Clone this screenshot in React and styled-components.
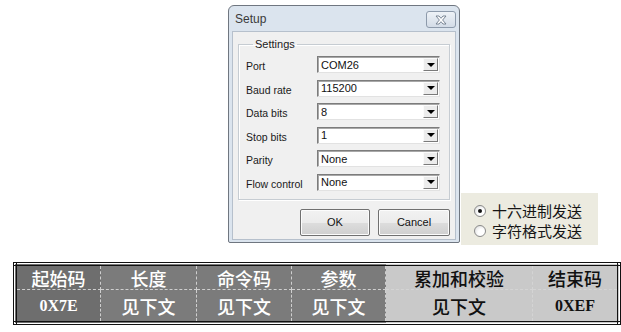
import React from 'react'
import styled, {createGlobalStyle} from 'styled-components'

const Global = createGlobalStyle`
  body{
    margin: 0;
    background: #fff;
  }
`;

const Page = styled.div`
  width: 621px;
  height: 332px;
  overflow: hidden;
`;

const Top = styled.div`
  display: flex;
  align-items: flex-start;
  padding: 5px 0 0 228px;
  gap: 1px;
`;

// --- setup dialog ---
const Dialog = styled.div`
  width: 232px;
  height: 238px;
  box-sizing: border-box;
  border: 1px solid #6f7680;
  border-radius: 6px 6px 2px 2px;
  background: #dbe4ee;
  padding: 0 3px 2px 3px;
  display: flex;
  flex-direction: column;
  font-family: "Liberation Sans", Arial, sans-serif;
`;

const TitleBar = styled.div`
  height: 25px;
  display: flex;
  align-items: center;
  justify-content: space-between;
  padding: 0 0 0 3px;
`;

const Title = styled.span`
  font-size: 12px;
  color: #3a3a3a;
`;

const CloseBtn = styled.div`
  width: 30px;
  height: 17px;
  box-sizing: border-box;
  border: 1px solid #8d9aab;
  border-radius: 3px;
  background: linear-gradient(#eef2f7, #d3dce7);
  display: flex;
  align-items: center;
  justify-content: center;
  margin-top: 2px;
`;

const Client = styled.div`
  flex: 1;
  background: #f0f0f0;
  border: 1px solid #b6c0cc;
  padding: 6px 5px 0 5px;
  display: flex;
  flex-direction: column;
`;

const Group = styled.fieldset`
  margin: 0;
  padding: 5px 9px 8px 7px;
  border: 1px solid #c6ccd2;
  box-shadow: inset 1px 1px #fff, 1px 1px #fff;
  display: flex;
  flex-direction: column;
  gap: 6.5px;
`;

const Legend = styled.legend`
  font-size: 11px;
  line-height: 13px;
  color: #222;
  padding: 0 2px;
  margin-left: 7px;
`;

const Row = styled.div`
  display: flex;
  align-items: center;
  height: 17px;
`;

const Label = styled.span`
  width: 71px;
  font-size: 10.5px;
  color: #1a1a1a;
  padding-top: 3px;
`;

const Combo = styled.div`
  width: 123px;
  height: 17px;
  box-sizing: border-box;
  border: 1px solid;
  border-color: #7c7c7c #e2e2e2 #e2e2e2 #7c7c7c;
  box-shadow: inset 1px 1px #a8a8a8;
  background: #fff;
  display: flex;
  align-items: center;
  justify-content: space-between;
  padding: 1px 1px 1px 3px;
  font-size: 11px;
  color: #111;
`;

const Arrow = styled.div`
  width: 15px;
  height: 13px;
  box-sizing: border-box;
  border: 1px solid;
  border-color: #fbfbfb #7a7a7a #7a7a7a #fbfbfb;
  background: #ececec;
  display: flex;
  align-items: center;
  justify-content: center;
  &::after{
    content: "";
    border-left: 4px solid transparent;
    border-right: 4px solid transparent;
    border-top: 4px solid #000;
  }
`;

const ButtonRow = styled.div`
  display: flex;
  justify-content: flex-end;
  gap: 8px;
  margin-top: 9px;
`;

const Btn = styled.div`
  width: ${p => p.w}px;
  height: 27px;
  box-sizing: border-box;
  border: 1px solid #707070;
  border-radius: 2px;
  background: linear-gradient(#f2f2f2 0%, #ebebeb 50%, #dddddd 51%, #cfcfcf 100%);
  box-shadow: inset 0 0 0 1px #fcfcfc;
  display: flex;
  align-items: center;
  justify-content: center;
  font-size: 11px;
  color: #111;
`;

// --- radio panel ---
const RadioPanel = styled.div`
  margin-top: 188px;
  width: 137px;
  height: 52px;
  box-sizing: border-box;
  background: #ecebe0;
  padding: 10px 0 0 13px;
  display: flex;
  flex-direction: column;
  gap: 4px;
`;

const RadioRow = styled.div`
  display: flex;
  align-items: center;
  gap: 6px;
  font-family: "Noto Sans CJK SC", sans-serif;
  font-size: 15px;
  line-height: 16px;
  color: #151515;
`;

const Dot = styled.span`
  width: 12px;
  height: 12px;
  box-sizing: border-box;
  border-radius: 50%;
  border: 1px solid #8a8a8a;
  background: radial-gradient(circle at 65% 65%, #fff 35%, #d6d6d6 100%);
  display: flex;
  align-items: center;
  justify-content: center;
  &::after{
    content: "";
    width: 4px;
    height: 4px;
    border-radius: 50%;
    background: ${p => p.on ? '#111' : 'transparent'};
  }
`;

// --- frame table ---
const Frame = styled.table`
  margin: 17px 0 0 13px;
  width: 603px;
  border-collapse: collapse;
  border: 4px double #111;
  table-layout: fixed;
`;

const Cell = styled.td`
  width: ${p => p.w}px;
  height: ${p => p.h}px;
  padding: 0;
  background: ${p => p.light ? '#c9c9c9' : p.dark ? '#6e6e6e' : '#7b7b7b'};
  color: ${p => p.light ? '#111' : '#fff'};
  border: 1px dashed ${p => p.light ? '#d4d4d4' : '#cfcfcf'};
  text-align: center;
  vertical-align: middle;
  font-family: ${p => p.latin ? '"Liberation Serif", serif' : '"Noto Sans CJK SC", sans-serif'};
  font-weight: ${p => p.latin ? 700 : 500};
  font-size: ${p => p.latin ? 16 : 18}px;
  line-height: 20px;
`;

const rows = [
  {label: 'Port', value: 'COM26'},
  {label: 'Baud rate', value: '115200'},
  {label: 'Data bits', value: '8'},
  {label: 'Stop bits', value: '1'},
  {label: 'Parity', value: 'None'},
  {label: 'Flow control', value: 'None'},
];

const cols = [
  {w: 83, head: '起始码', body: '0X7E', latin: true, dark: true},
  {w: 95, head: '长度', body: '见下文'},
  {w: 94, head: '命令码', body: '见下文'},
  {w: 93, head: '参数', body: '见下文'},
  {w: 146, head: '累加和校验', body: '见下文', light: true},
  {w: 84, head: '结束码', body: '0XEF', latin: true, light: true},
];

export default function App(){
  return (
    <Page>
      <Global/>
      <Top>
        <Dialog>
          <TitleBar>
            <Title>Setup</Title>
            <CloseBtn>
              <svg width="12" height="10" viewBox="0 0 12 10">
                <path d="M1 1h3l2 2.3L8 1h3L7.6 5 11 9H8L6 6.7 4 9H1l3.4-4z"
                  fill="#fff" stroke="#6d7a8b" strokeWidth="0.9" strokeLinejoin="round"/>
              </svg>
            </CloseBtn>
          </TitleBar>
          <Client>
            <Group>
              <Legend>Settings</Legend>
              {rows.map(r => (
                <Row key={r.label}>
                  <Label>{r.label}</Label>
                  <Combo>{r.value}<Arrow/></Combo>
                </Row>
              ))}
            </Group>
            <ButtonRow>
              <Btn w={70}>OK</Btn>
              <Btn w={72}>Cancel</Btn>
            </ButtonRow>
          </Client>
        </Dialog>
        <RadioPanel>
          <RadioRow><Dot on/>十六进制发送</RadioRow>
          <RadioRow><Dot/>字符格式发送</RadioRow>
        </RadioPanel>
      </Top>
      <Frame>
        <tbody>
          <tr>
            {cols.map(c => <Cell key={c.head} w={c.w} h={23} light={c.light} dark={c.dark}>{c.head}</Cell>)}
          </tr>
          <tr>
            {cols.map(c => <Cell key={c.head} w={c.w} h={31} light={c.light} dark={c.dark} latin={c.latin}>{c.body}</Cell>)}
          </tr>
        </tbody>
      </Frame>
    </Page>
  )
}
